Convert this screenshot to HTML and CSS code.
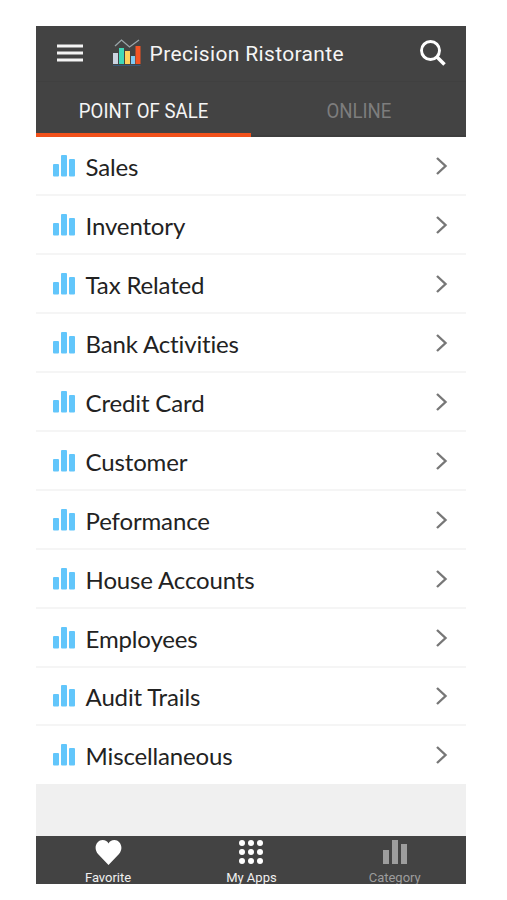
FILE: index.html
```html
<!DOCTYPE html>
<html lang="en">
<head>
<meta charset="utf-8">
<title>Precision Ristorante</title>
<link rel="stylesheet" href="styles.css">
</head>
<body>
<svg class="defs" width="0" height="0" aria-hidden="true">
  <symbol id="bars" viewBox="0 0 22 22"><rect x="0" y="9" width="6" height="12.5" rx="1"/><rect x="8" y="0" width="6" height="21.5" rx="1"/><rect x="16" y="4" width="6" height="17.5" rx="1"/></symbol>
  <symbol id="chevron" viewBox="0 0 12 20"><path d="M1.5 2 10 10 1.5 18" fill="none" stroke="currentColor" stroke-width="2.4"/></symbol>
</svg>
<main class="phone">
  <header class="header">
    <div class="bar">
      <svg class="menu" viewBox="0 0 26 18"><path d="M0 2h26M0 9h26M0 16h26" stroke="#f4f4f4" stroke-width="2.8"/></svg>
      <svg class="logo" viewBox="0 0 28 28">
        <path d="M2 7 8.500 1 16.500 8 26 1" fill="none" stroke="#9aa4a8" stroke-width="1.3"/>
        <rect x="0" y="14" width="5" height="11" fill="#ccd3e0"/><rect x="6" y="9" width="5" height="16" fill="#3fd8b8"/><rect x="12" y="12" width="5" height="13" fill="#ffd15c"/><rect x="18" y="17" width="4" height="8" fill="#7ecbf5"/><rect x="22.500" y="7" width="5" height="18" fill="#f55425"/>
        <path d="M0 26.500h27.500" stroke="#36587a" stroke-width="1"/>
      </svg>
      <h1 class="title">Precision Ristorante</h1>
      <svg class="search" viewBox="0 0 26 26"><circle cx="10.500" cy="10.500" r="9" fill="none" stroke="#fff" stroke-width="2.900"/><path d="m17 17 7.500 7.500" stroke="#fff" stroke-width="3.500"/></svg>
    </div>
    <nav class="tabs"><div class="tab active"><span>POINT OF SALE</span></div><div class="tab online"><span>ONLINE</span></div></nav>
  </header>
  <ul class="list">
    <li class="row"><svg class="bars"><use href="#bars"/></svg><span>Sales</span><svg class="chevron"><use href="#chevron"/></svg></li>
    <li class="row"><svg class="bars"><use href="#bars"/></svg><span>Inventory</span><svg class="chevron"><use href="#chevron"/></svg></li>
    <li class="row"><svg class="bars"><use href="#bars"/></svg><span>Tax Related</span><svg class="chevron"><use href="#chevron"/></svg></li>
    <li class="row"><svg class="bars"><use href="#bars"/></svg><span>Bank Activities</span><svg class="chevron"><use href="#chevron"/></svg></li>
    <li class="row"><svg class="bars"><use href="#bars"/></svg><span>Credit Card</span><svg class="chevron"><use href="#chevron"/></svg></li>
    <li class="row"><svg class="bars"><use href="#bars"/></svg><span>Customer</span><svg class="chevron"><use href="#chevron"/></svg></li>
    <li class="row"><svg class="bars"><use href="#bars"/></svg><span>Peformance</span><svg class="chevron"><use href="#chevron"/></svg></li>
    <li class="row"><svg class="bars"><use href="#bars"/></svg><span>House Accounts</span><svg class="chevron"><use href="#chevron"/></svg></li>
    <li class="row"><svg class="bars"><use href="#bars"/></svg><span>Employees</span><svg class="chevron"><use href="#chevron"/></svg></li>
    <li class="row"><svg class="bars"><use href="#bars"/></svg><span>Audit Trails</span><svg class="chevron"><use href="#chevron"/></svg></li>
    <li class="row"><svg class="bars"><use href="#bars"/></svg><span>Miscellaneous</span><svg class="chevron"><use href="#chevron"/></svg></li>
  </ul>
  <div class="filler"></div>
  <footer class="footer">
    <div class="item"><svg class="heart" viewBox="0 0 26 25"><path d="M13 25 2.500 14C-3 7 2 0 7 0c3 0 5 1.500 6 3.500C14 1.500 16 0 19 0c5 0 10 7 4.500 14Z" fill="#fff"/></svg><span>Favorite</span></div>
    <div class="item"><svg class="dots" viewBox="0 0 24 24" fill="#fff"><circle cx="3" cy="3" r="3"/><circle cx="12" cy="3" r="3"/><circle cx="21" cy="3" r="3"/><circle cx="3" cy="12" r="3"/><circle cx="12" cy="12" r="3"/><circle cx="21" cy="12" r="3"/><circle cx="3" cy="21" r="3"/><circle cx="12" cy="21" r="3"/><circle cx="21" cy="21" r="3"/></svg><span>My Apps</span></div>
    <div class="item dim"><svg class="category" viewBox="0 0 24 24"><path d="M0 10h6v14H0zM9 0h6v24H9zM18 4h6v20h-6z" fill="currentColor"/></svg><span>Category</span></div>
  </footer>
</main>
</body>
</html>
```
FILE: styles.css
```css
* { box-sizing: border-box; }
body { margin: 0; background: #fff; font-family: Roboto, sans-serif; }
svg { display: block; flex: none; }
.defs { position: absolute; }
.phone { width: 430px; margin: 26px 0 0 36.4px; }
.header { height: 111px; background: #434343; color: #f5f5f5; }
.bar { height: 56px; display: flex; align-items: center; padding: 0 20.4px 1px 20.6px; border-bottom: 1px solid #404040; }
.menu { width: 26px; height: 18px; }
.logo { width: 28px; height: 28px; margin: 0 9px 0 29.6px; }
.title { margin: 0; padding-top: 2px; font-size: 21px; font-weight: 400; line-height: 30px; letter-spacing: 0.35px; white-space: nowrap; }
.search { width: 26px; height: 26px; margin-left: auto; }
.tabs { display: flex; height: 55px; }
.tab { width: 50%; display: flex; justify-content: center; border-bottom: 2px solid #3e3e3e; padding-top: 14px; font-size: 20px; line-height: 30px; white-space: nowrap; color: #7d7d7d; }
.tab span { transform: scaleX(0.93); }
.active { color: #f5f5f5; border-bottom: 4px solid #f1511b; }
.list { margin: 0; padding: 0; list-style: none; }
.row { height: 58.9px; display: flex; align-items: center; padding: 1px 18.4px 0 16.6px; border-bottom: 2px solid #f5f5f5; font: 24px/32px Lato, sans-serif; font-variant-ligatures: none; letter-spacing: -0.15px; color: #222; white-space: nowrap; }
.row:first-child { height: 59.4px; }
.row:last-child { height: 57.5px; border-bottom-color: transparent; }
.bars { width: 22px; height: 22px; fill: #62c6fb; margin-right: 10.6px; }
.row span { padding-top: 2px; }
.chevron { width: 13px; height: 20px; margin-left: auto; color: #777; }
.filler { height: 52px; background: #f0f0f0; }
.footer { height: 48px; background: #434343; display: flex; color: #f0f0f0; overflow: hidden; }
.item { flex: 1; display: flex; flex-direction: column; align-items: center; padding-top: 4px; font-size: 13px; line-height: 16px; }
.item span { margin-top: auto; margin-bottom: -2px; }
.heart { width: 27px; height: 25px; }
.dots, .category { width: 24px; height: 24px; }
.dim { color: #9d9d9d; }
```
